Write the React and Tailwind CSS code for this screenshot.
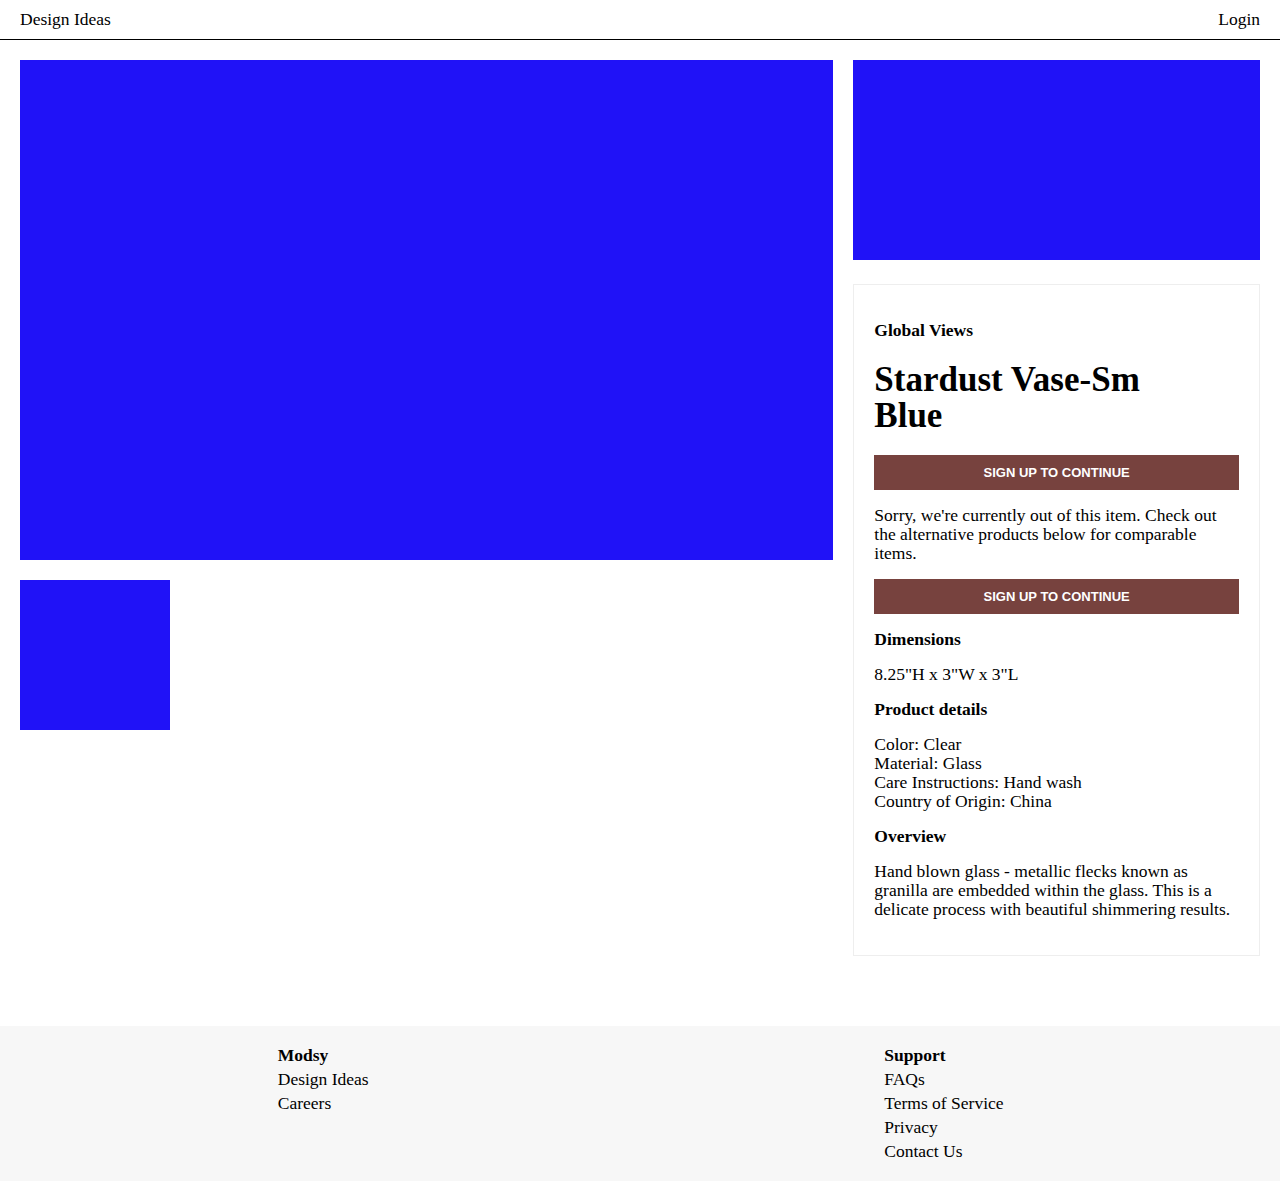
const SERIF = "font-['Liberation_Serif','Times_New_Roman',serif]";

function Heading({ children, className = "" }) {
  return <h4 className={`font-bold text-[17.5px] leading-[19px] ${className}`}>{children}</h4>;
}

export default function App() {
  return (
    <div className={`${SERIF} text-black bg-white min-h-[1181px] flex flex-col`}>
      <header className="h-10 border-b border-black px-5 flex items-center justify-between text-[17.5px] leading-[19px]">
        <a href="#">Design Ideas</a>
        <a href="#">Login</a>
      </header>

      <main className="grid grid-cols-[2fr_1fr] gap-5 px-5 pt-5 pb-[70px]">
        <div className="flex flex-col gap-5">
          <div className="h-[500px] bg-[#2012f7]" />
          <div className="w-[150px] h-[150px] bg-[#2012f7]" />
        </div>

        <div className="flex flex-col">
          <div className="h-[200px] bg-[#2012f7]" />
          <div className="mt-6 border border-[#eeeeee] px-5 pt-5 pb-5">
            <Heading className="mt-4">Global Views</Heading>
            <h1 className="mt-[22px] font-bold text-[35px] leading-9 max-w-[300px]">Stardust Vase-Sm Blue</h1>
            <button className="mt-[21px] w-full h-[35px] bg-[#77423e] text-white font-['Liberation_Sans',Arial,sans-serif] font-bold text-[13px] uppercase">
              Sign up to continue
            </button>
            <p className="mt-4 text-[17.5px] leading-[19px]">
              Sorry, we're currently out of this item. Check out the alternative products below for comparable items.
            </p>
            <button className="mt-4 w-full h-[35px] bg-[#77423e] text-white font-['Liberation_Sans',Arial,sans-serif] font-bold text-[13px] uppercase">
              Sign up to continue
            </button>
            <Heading className="mt-4">Dimensions</Heading>
            <p className="mt-4 text-[17.5px] leading-[19px]">8.25"H x 3"W x 3"L</p>
            <Heading className="mt-4">Product details</Heading>
            <p className="mt-4 text-[17.5px] leading-[19px]">
              Color: Clear<br />
              Material: Glass<br />
              Care Instructions: Hand wash<br />
              Country of Origin: China
            </p>
            <Heading className="mt-4">Overview</Heading>
            <p className="mt-4 mb-4 text-[17.5px] leading-[19px]">
              Hand blown glass - metallic flecks known as granilla are embedded within the glass. This is a delicate process with beautiful shimmering results.
            </p>
          </div>
        </div>
      </main>

      <footer className="mt-auto bg-[#f7f7f7] px-5 pt-[17px] pb-[18px] flex justify-around text-[17.5px] leading-6 whitespace-nowrap">
        <div className="w-[91px] flex flex-col">
          <span className="font-bold">Modsy</span>
          <a href="#">Design Ideas</a>
          <a href="#">Careers</a>
        </div>
        <div className="w-[118px] flex flex-col">
          <span className="font-bold">Support</span>
          <a href="#">FAQs</a>
          <a href="#">Terms of Service</a>
          <a href="#">Privacy</a>
          <a href="#">Contact Us</a>
        </div>
      </footer>
    </div>
  );
}
